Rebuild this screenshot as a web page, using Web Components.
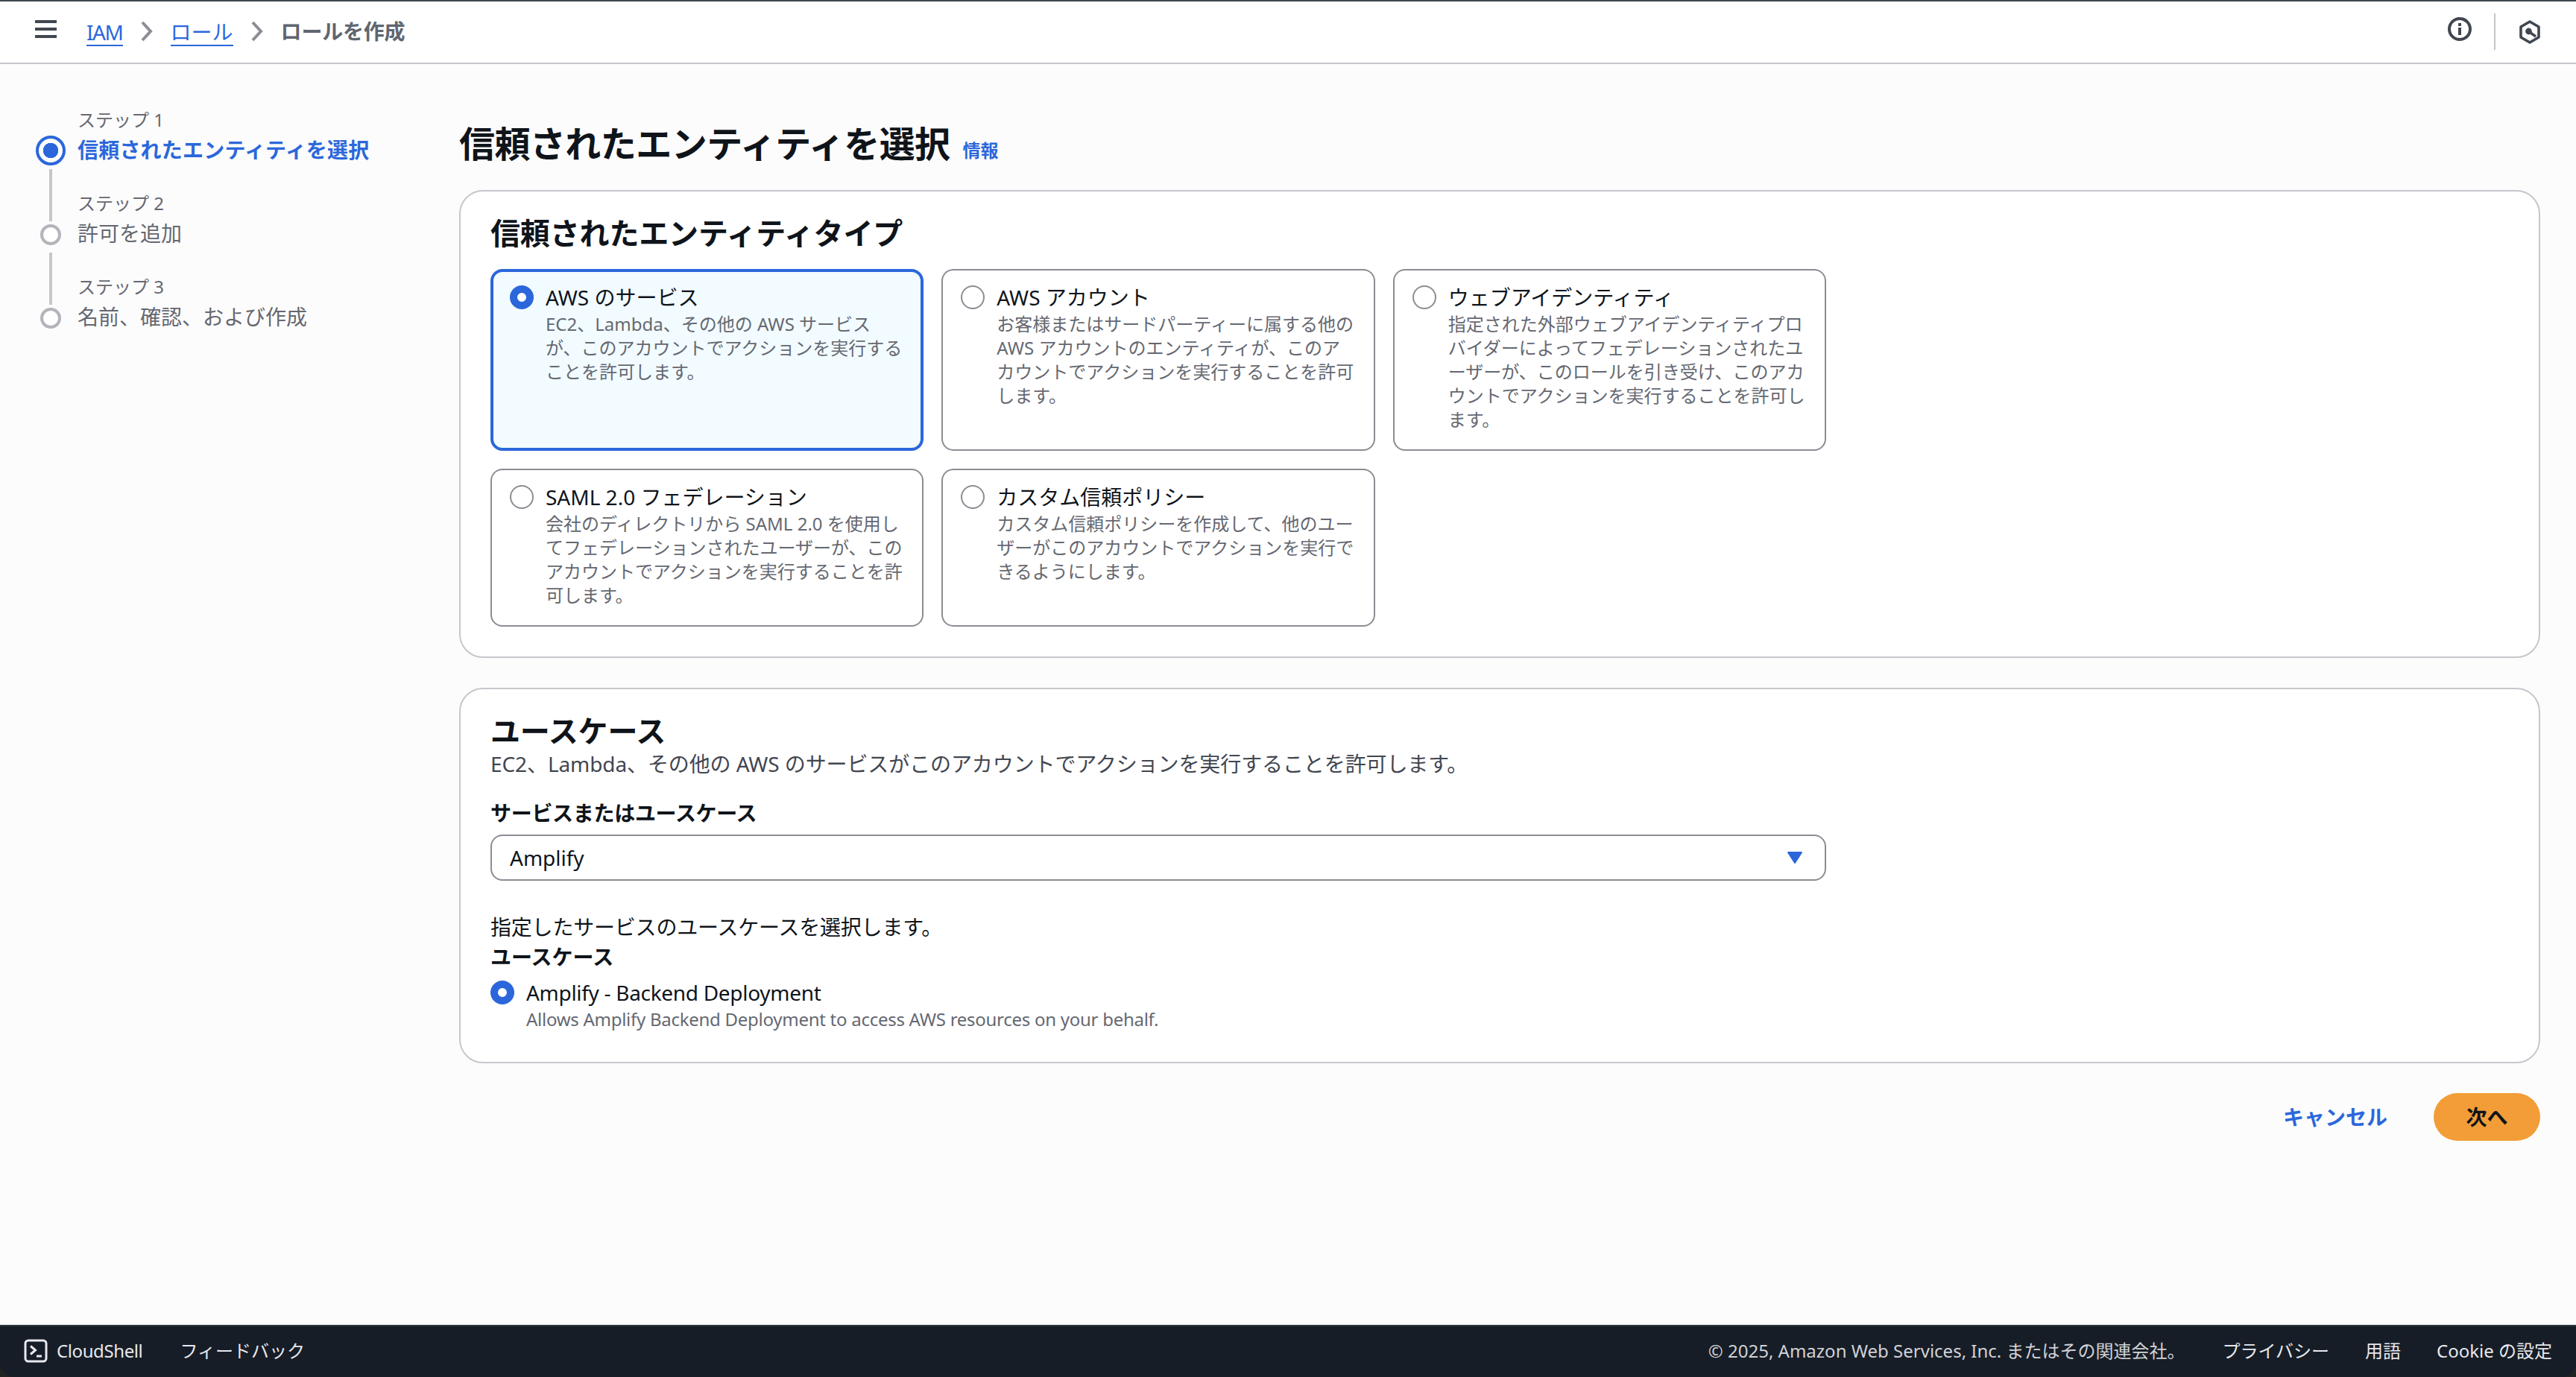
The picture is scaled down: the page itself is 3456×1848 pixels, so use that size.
<!DOCTYPE html>
<html lang="ja">
<head>
<meta charset="utf-8">
<title>ロールを作成</title>
<style>
  html, body { margin: 0; height: 100%; }
  body {
    background: #fcfcfc;
    color: #0f141a;
    font-family: "Noto Sans", "Noto Sans CJK JP", sans-serif;
    font-size: 28px;
    line-height: 40px;
    overflow: hidden;
  }
  app-shell { height: 1848px; }
</style>
</head>
<body>
<app-shell>
  <top-bar slot="top">
    <a-crumb href="#" style="letter-spacing:-1.4px">IAM</a-crumb>
    <a-crumb href="#">ロール</a-crumb>
    <a-crumb current>ロールを作成</a-crumb>
  </top-bar>

  <wizard-steps slot="side">
    <wizard-step label="ステップ 1" active first>信頼されたエンティティを選択</wizard-step>
    <wizard-step label="ステップ 2">許可を追加</wizard-step>
    <wizard-step label="ステップ 3" last>名前、確認、および作成</wizard-step>
  </wizard-steps>

  <page-title>信頼されたエンティティを選択</page-title>

  <form-panel heading="信頼されたエンティティタイプ">
    <tile-grid>
      <radio-tile selected heading="AWS のサービス">EC2、Lambda、その他の AWS サービスが、このアカウントでアクションを実行することを許可します。</radio-tile>
      <radio-tile heading="AWS アカウント">お客様またはサードパーティーに属する他の AWS アカウントのエンティティが、このアカウントでアクションを実行することを許可します。</radio-tile>
      <radio-tile heading="ウェブアイデンティティ">指定された外部ウェブアイデンティティプロバイダーによってフェデレーションされたユーザーが、このロールを引き受け、このアカウントでアクションを実行することを許可します。</radio-tile>
      <radio-tile heading="SAML 2.0 フェデレーション">会社のディレクトリから SAML 2.0 を使用してフェデレーションされたユーザーが、このアカウントでアクションを実行することを許可します。</radio-tile>
      <radio-tile heading="カスタム信頼ポリシー">カスタム信頼ポリシーを作成して、他のユーザーがこのアカウントでアクションを実行できるようにします。</radio-tile>
    </tile-grid>
  </form-panel>

  <form-panel heading="ユースケース" description="EC2、Lambda、その他の AWS のサービスがこのアカウントでアクションを実行することを許可します。">
    <use-case-form></use-case-form>
  </form-panel>

  <wizard-actions></wizard-actions>

  <bottom-bar slot="bottom"></bottom-bar>
</app-shell>

<script>
function shadow(el, html) {
  el.attachShadow({ mode: "open" }).innerHTML = html;
}

class AppShell extends HTMLElement {
  connectedCallback() {
    shadow(this, `
    <style>
      :host { display: flex; flex-direction: column; }
      .body { flex: 1; display: flex; min-height: 0; }
      .side { flex: 0 0 616px; padding-top: 59px; box-sizing: border-box; }
      .main { flex: 1; padding: 77px 48px 0 0; display: flex; flex-direction: column; min-width: 0; }
    </style>
    <slot name="top"></slot>
    <div class="body">
      <div class="side"><slot name="side"></slot></div>
      <div class="main"><slot></slot></div>
    </div>
    <slot name="bottom"></slot>`);
  }
}

class TopBar extends HTMLElement {
  connectedCallback() {
    shadow(this, `
    <style>
      :host {
        display: flex; align-items: center; box-sizing: border-box; height: 86px;
        background: #fff; border-top: 2px solid #414750; border-bottom: 2px solid #c6c6cd;
        padding: 0 48px 2px 47px;
      }
      nav { display: flex; align-items: center; margin-left: 40px; }
      .right { margin-left: auto; display: flex; align-items: center; }
      .rule { width: 2px; height: 49px; background: #c6c6cd; margin: 1px 32px 0 30px; }
      svg { display: block; }
    </style>
    <svg width="29" height="24" viewBox="0 0 29 24" fill="#414750" style="margin-top:-6px">
      <rect width="29" height="4"/><rect y="10" width="29" height="4"/><rect y="20" width="29" height="4"/>
    </svg>
    <nav><slot></slot></nav>
    <div class="right">
      <svg width="32" height="32" viewBox="0 0 32 32" style="margin-top:-6px">
        <circle cx="16" cy="16" r="14" fill="none" stroke="#414750" stroke-width="4"/>
        <rect x="14" y="8" width="4" height="4" fill="#414750"/>
        <rect x="14" y="14" width="4" height="10" fill="#414750"/>
      </svg>
      <div class="rule"></div>
      <svg width="28" height="32" viewBox="0 0 28 32" style="margin-top:2px">
        <path d="M14 2 26 9V23L14 30 2 23V9Z" fill="none" stroke="#414750" stroke-width="3.6" stroke-linejoin="round"/>
        <circle cx="12.5" cy="15" r="4.4" fill="#414750"/>
        <path d="M13 15.5 22 22" stroke="#414750" stroke-width="3.4"/>
      </svg>
    </div>`);
  }
}

class ACrumb extends HTMLElement {
  connectedCallback() {
    const current = this.hasAttribute("current");
    shadow(this, `
    <style>
      :host { display: flex; align-items: center; }
      a { color: #2b67db; text-decoration: none; border-bottom: 2px solid #2b67db; line-height: 34px; margin-top: 4px; display: block; }
      b { color: #5f6670; font-weight: 700; line-height: 40px; display: block; letter-spacing: -.2px; }
      svg { display: block; margin: 0 24px; }
    </style>
    ${current
      ? `<b><slot></slot></b>`
      : `<a href="#"><slot></slot></a>
         <svg width="16" height="28" viewBox="0 0 16 28"><path d="M2 2 13 14 2 26" fill="none" stroke="#8c8c94" stroke-width="4"/></svg>`}`);
  }
}

class WizardSteps extends HTMLElement {
  connectedCallback() {
    shadow(this, `<style>:host { display: block; padding-left: 48px; }</style><slot></slot>`);
  }
}

class WizardStep extends HTMLElement {
  connectedCallback() {
    shadow(this, `
    <style>
      :host {
        display: grid; grid-template-columns: 40px 1fr; grid-template-rows: 36px 40px 36px;
        column-gap: 16px; color: #656871;
      }
      .label { grid-column: 2; grid-row: 1; font-size: 24px; line-height: 32px; }
      .title { grid-column: 2; grid-row: 2; font-size: 28px; line-height: 40px; white-space: nowrap; }
      :host([active]) .title { color: #2b67db; font-weight: 700; letter-spacing: .2px; }
      .line { grid-column: 1; width: 4px; background: #c6c6cd; justify-self: center; }
      .up { grid-row: 1; height: 40px; }
      .down { grid-row: 3; height: 30px; margin-top: 6px; }
      :host([first]) .up, :host([last]) .down { visibility: hidden; }
      .dot {
        grid-column: 1; grid-row: 2; justify-self: center; align-self: center; box-sizing: border-box;
        width: 28px; height: 28px; border-radius: 50%; border: 4px solid #b4b4bb; background: #fff;
        position: relative; top: 2px;
      }
      :host([active]) .dot {
        width: 40px; height: 40px; border-color: #2b67db; top: 1px;
        background: radial-gradient(circle, #2b67db 0 10px, #fff 10.5px);
      }
    </style>
    <div class="line up"></div>
    <div class="label">${this.getAttribute("label")}</div>
    <div class="dot"></div>
    <div class="title"><slot></slot></div>
    <div class="line down"></div>`);
  }
}

class PageTitle extends HTMLElement {
  connectedCallback() {
    shadow(this, `
    <style>
      :host { display: flex; align-items: baseline; gap: 17px; margin-bottom: 32px; }
      h1 { margin: 0; font-size: 48px; line-height: 60px; font-weight: 700; letter-spacing: -.55px; }
      a { color: #2b67db; font-size: 24px; font-weight: 700; text-decoration: none; }
    </style>
    <h1><slot></slot></h1><a href="#">情報</a>`);
  }
}

class FormPanel extends HTMLElement {
  connectedCallback() {
    const desc = this.getAttribute("description");
    shadow(this, `
    <style>
      :host {
        display: block; box-sizing: border-box; background: #fff; border: 2px solid #c6c6cd;
        border-radius: 32px; padding: 32px 40px 40px; margin-bottom: 40px;
      }
      h2 { margin: 0; font-size: 40px; line-height: 48px; font-weight: 700; letter-spacing: -.15px; }
      p { margin: 0; color: #424650; font-size: 28px; line-height: 40px; letter-spacing: -.1px; }
    </style>
    <h2>${this.getAttribute("heading")}</h2>
    ${desc ? `<p>${desc}</p>` : ""}
    <slot></slot>`);
  }
}

class TileGrid extends HTMLElement {
  connectedCallback() {
    shadow(this, `
    <style>
      :host { display: grid; grid-template-columns: repeat(3, 1fr); gap: 24px; width: 1792px; margin-top: 24px; }
    </style>
    <slot></slot>`);
  }
}

class RadioMark extends HTMLElement {
  connectedCallback() {
    shadow(this, `
    <style>
      :host {
        display: block; box-sizing: border-box; width: 32px; height: 32px; border-radius: 50%;
        border: 2px solid #8c8c94; background: #fff; flex: none;
      }
      :host([checked]) { border: 10px solid #2b67db; }
    </style>`);
  }
}

class RadioTile extends HTMLElement {
  connectedCallback() {
    const sel = this.hasAttribute("selected");
    shadow(this, `
    <style>
      :host {
        display: flex; gap: 16px; box-sizing: border-box; background: #fff;
        border: 2px solid #8c8c94; border-radius: 16px; padding: 16px 24px 24px;
      }
      :host([selected]) { background: #f2fbff; border: 4px solid #2b67db; padding: 14px 22px 22px; }
      radio-mark { margin-top: 4px; }
      .t { font-size: 28px; line-height: 40px; }
      .d { font-size: 24px; line-height: 32px; color: #656871; line-break: loose; }
    </style>
    <radio-mark ${sel ? "checked" : ""}></radio-mark>
    <div>
      <div class="t">${this.getAttribute("heading")}</div>
      <div class="d"><slot></slot></div>
    </div>`);
  }
}

class UseCaseForm extends HTMLElement {
  connectedCallback() {
    shadow(this, `
    <style>
      :host { display: block; width: 1792px; font-size: 28px; line-height: 40px; margin-bottom: 1px; }
      .lab { font-weight: 700; }
      .first { margin-top: 26px; letter-spacing: -.3px; }
      .note { margin-top: 42px; letter-spacing: -.2px; }
      .opt { display: flex; gap: 16px; margin-top: 8px; letter-spacing: -.3px; }
      radio-mark { margin-top: 4px; }
      small { display: block; font-size: 24px; line-height: 32px; color: #656871; letter-spacing: -.27px; }
      aws-select { margin-top: 9px; }
    </style>
    <div class="lab first">サービスまたはユースケース</div>
    <aws-select>Amplify</aws-select>
    <div class="note">指定したサービスのユースケースを選択します。</div>
    <div class="lab">ユースケース</div>
    <div class="opt">
      <radio-mark checked></radio-mark>
      <div>Amplify - Backend Deployment<small>Allows Amplify Backend Deployment to access AWS resources on your behalf.</small></div>
    </div>`);
  }
}

class AwsSelect extends HTMLElement {
  connectedCallback() {
    shadow(this, `
    <style>
      :host {
        display: flex; align-items: center; justify-content: space-between; box-sizing: border-box; height: 62px;
        border: 2px solid #8c8c94; border-radius: 16px; padding: 0 30px 0 24px; background: #fff;
      }
      svg { display: block; }
    </style>
    <span><slot></slot></span>
    <svg width="20" height="16" viewBox="0 0 20 16"><path d="M1 1H19L10 15Z" fill="#2b67db" stroke="#2b67db" stroke-width="2" stroke-linejoin="round"/></svg>`);
  }
}

class WizardActions extends HTMLElement {
  connectedCallback() {
    shadow(this, `
    <style>
      :host { display: flex; justify-content: flex-end; align-items: center; gap: 62px; font-weight: 700; }
      a { color: #2b67db; text-decoration: none; }
      button {
        font: inherit; color: #0f141a; background: #f29d38; border: 0; border-radius: 32px;
        width: 143px; height: 64px; padding: 0;
      }
    </style>
    <a href="#">キャンセル</a><button>次へ</button>`);
  }
}

class BottomBar extends HTMLElement {
  connectedCallback() {
    shadow(this, `
    <style>
      :host { display: block; background: #222; font-size: 24px; line-height: 32px; }
      .bar {
        display: flex; align-items: center; box-sizing: border-box; height: 70px; padding: 0 32px 2px;
        background: #161d26; border-top: 2px solid #2d3743; border-radius: 0 0 20px 20px; color: #e8e8ee;
      }
      .cs { display: flex; align-items: center; gap: 12px; margin-right: 50px; letter-spacing: -.4px; }
      svg { display: block; }
      .right { margin-left: auto; display: flex; gap: 48px; }
      .copy { color: #d1d1d6; margin-right: 2px; }
    </style>
    <div class="bar">
      <span class="cs">
        <svg width="32" height="32" viewBox="0 0 32 32" fill="none" stroke="#e8e8ee" stroke-width="3">
          <rect x="2" y="2" width="28" height="28" rx="4"/>
          <path d="M9 9.5 15.5 15 9 20.5"/><path d="M17 23H24"/>
        </svg>
        CloudShell
      </span>
      <span>フィードバック</span>
      <div class="right">
        <span class="copy">© 2025, Amazon Web Services, Inc. またはその関連会社。</span>
        <span>プライバシー</span><span>用語</span><span>Cookie の設定</span>
      </div>
    </div>`);
  }
}

customElements.define("radio-mark", RadioMark);
customElements.define("aws-select", AwsSelect);
customElements.define("a-crumb", ACrumb);
customElements.define("top-bar", TopBar);
customElements.define("wizard-step", WizardStep);
customElements.define("wizard-steps", WizardSteps);
customElements.define("page-title", PageTitle);
customElements.define("form-panel", FormPanel);
customElements.define("tile-grid", TileGrid);
customElements.define("radio-tile", RadioTile);
customElements.define("use-case-form", UseCaseForm);
customElements.define("wizard-actions", WizardActions);
customElements.define("bottom-bar", BottomBar);
customElements.define("app-shell", AppShell);
</script>
</body>
</html>
